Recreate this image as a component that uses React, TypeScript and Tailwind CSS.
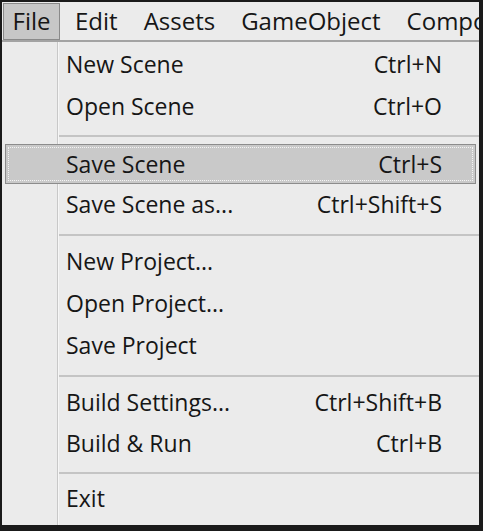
import React from "react";

type Item = { label: string; shortcut?: string; h: number; active?: boolean };

const Row = ({ label, shortcut, h, active }: Item) => (
  <div className="relative flex items-stretch" style={{ height: h }}>
    {active && (
      <div className="absolute left-[3px] right-[3px] top-0 bottom-0 border border-[#8c8c8c] bg-[#c9c9c9]">
        <div className="absolute inset-[2px] border border-dotted border-[#f4f4f4]" />
      </div>
    )}
    <div className="relative w-[64px] shrink-0" />
    <div className="relative flex flex-1 items-center justify-between pr-[37px]">
      <span>{label}</span>
      {shortcut && <span>{shortcut}</span>}
    </div>
  </div>
);

const Sep = ({ mt, mb }: { mt: number; mb: number }) => (
  <div className="flex" style={{ marginTop: mt, marginBottom: mb }}>
    <div className="w-[55px] shrink-0" />
    <div className="h-[2px] flex-1 bg-[#c4c4c4]" />
  </div>
);

export default function App() {
  return (
    <div
      className="relative h-[531px] w-[483px] overflow-hidden border-t-[2px] border-l-[2px] border-r-[4px] border-b-[6px] border-[#1a1a1a] bg-[#ebebeb] text-[#161616]"
      style={{ fontFamily: '"Open Sans", "Noto Sans", sans-serif' }}
    >
      {/* menu bar */}
      <div className="flex h-[38px] items-stretch overflow-hidden whitespace-nowrap text-[24px] leading-none">
        <div className="ml-[1px] mt-[1px] flex w-[57px] shrink-0 items-center justify-center border border-[#8a8a8a] bg-[#c7c7c7] pb-[2px]">
          File
        </div>
        <div className="flex shrink-0 items-center gap-[26px] pl-[15px] pb-[1px]">
          <span>Edit</span>
          <span>Assets</span>
          <span>GameObject</span>
          <span>Component</span>
        </div>
      </div>
      <div className="h-[2px] bg-[#a3a3a3]" />

      {/* dropdown */}
      <div className="relative text-[23px] leading-none">
        <div className="absolute left-[55px] top-0 bottom-[-10px] w-[1px] bg-[#c8c8c8]" />
        <div className="absolute left-[56px] top-0 bottom-[-10px] w-[1px] bg-[#f6f6f6]" />
        <div className="pt-[1px]">
          <Row label="New Scene" shortcut="Ctrl+N" h={42} />
          <Row label="Open Scene" shortcut="Ctrl+O" h={42} />
          <Sep mt={8} mb={7} />
          <Row label="Save Scene" shortcut="Ctrl+S" h={40} active />
          <Row label="Save Scene as..." shortcut="Ctrl+Shift+S" h={40} />
          <Sep mt={10} mb={4} />
          <Row label="New Project..." h={42} />
          <Row label="Open Project..." h={42} />
          <Row label="Save Project" h={42} />
          <Sep mt={9} mb={4} />
          <Row label="Build Settings..." shortcut="Ctrl+Shift+B" h={42} />
          <Row label="Build & Run" shortcut="Ctrl+B" h={41} />
          <Sep mt={8} mb={3} />
          <Row label="Exit" h={42} />
        </div>
      </div>
    </div>
  );
}
